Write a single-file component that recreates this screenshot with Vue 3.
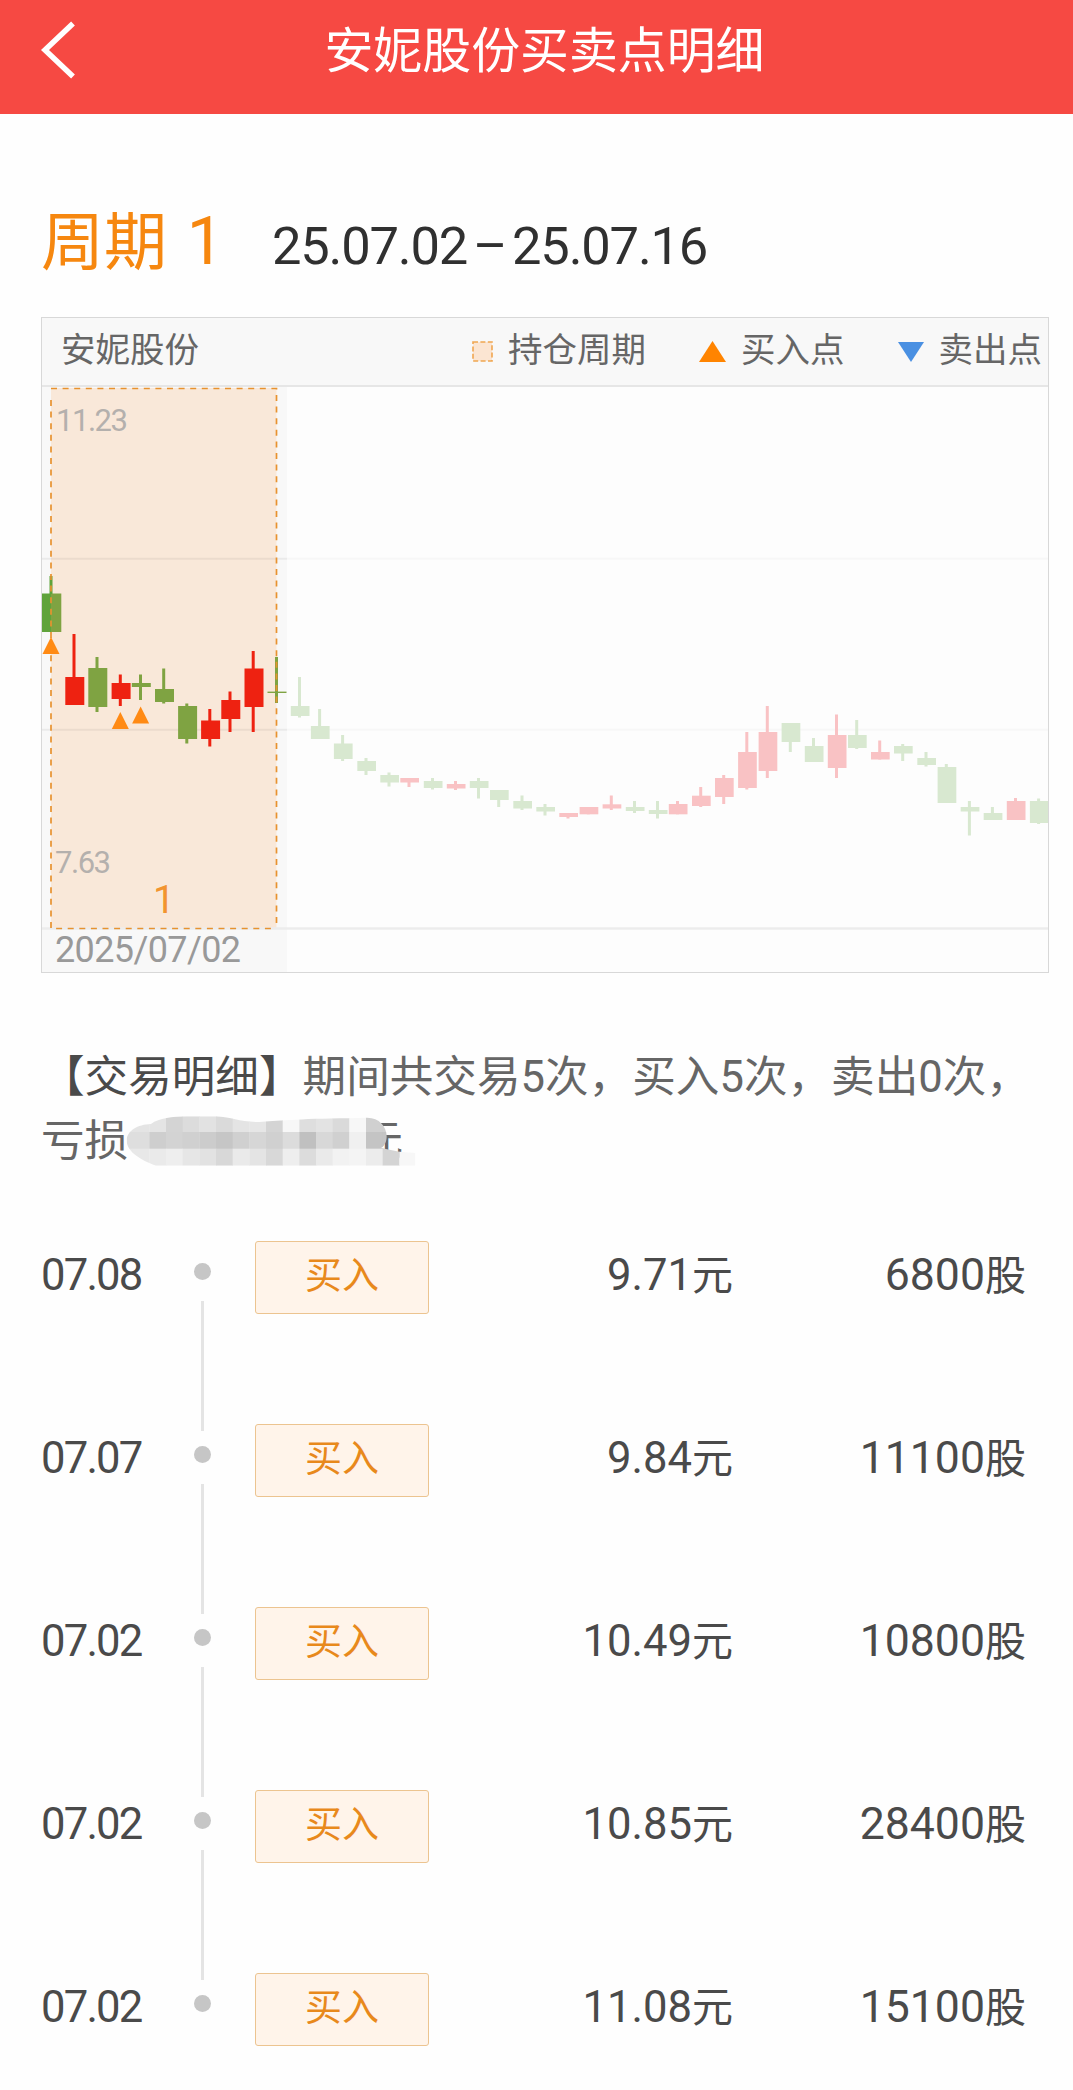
<!-- src/App.vue -->
<script setup>
// Candles: [center x, body top, body bottom, wick top, wick bottom, direction]
const heldCandles = [
  [74, 677, 705, 634, 705, 'up'],
  [97, 668, 707, 657, 712, 'down'],
  [120.3, 683, 699, 674.5, 706, 'up'],
  [140.5, 683, 687, 674.5, 700, 'down'],
  [163.7, 689, 702, 668.5, 703.5, 'down'],
  [186.8, 706, 739, 703.5, 743.5, 'down'],
  [209.8, 720.5, 739, 709, 746.5, 'up'],
  [230, 700, 719, 691.5, 732, 'up'],
  [253.2, 668.5, 707, 651, 732, 'up']
];

const laterCandles = [
  [299.5, 706, 716, 677, 717.5, 'down'],
  [319.6, 726, 739, 709, 739, 'down'],
  [342.6, 743.5, 759, 735, 761, 'down'],
  [366, 761, 771, 758, 775, 'down'],
  [389, 775, 782.5, 772.5, 786.5, 'down'],
  [409, 778, 782.5, 778, 787, 'up'],
  [432.5, 781, 788, 778, 789.5, 'down'],
  [455.5, 784, 788.5, 781, 790, 'up'],
  [478.5, 781, 788, 778, 798.5, 'down'],
  [498.7, 790, 800, 790, 807, 'down'],
  [522, 801, 808.5, 795.5, 810, 'down'],
  [545, 807, 811.5, 804, 815.5, 'down'],
  [568, 813, 817, 813, 818.5, 'up'],
  [588.3, 807, 814.3, 807, 814.3, 'up'],
  [611.3, 804.3, 808.5, 795.5, 810, 'up'],
  [634.5, 807, 811, 801, 813, 'down'],
  [657.5, 810, 814, 801, 818.5, 'down'],
  [677.5, 804, 814.3, 801, 814.3, 'up'],
  [700.7, 795.7, 806, 787, 807, 'up'],
  [723.7, 778, 797, 775, 804, 'up'],
  [746.8, 752, 788, 732, 789.5, 'up'],
  [767.3, 732, 771, 706, 778, 'up'],
  [790.3, 723, 742, 723, 752, 'down'],
  [813.5, 746, 762, 738, 762, 'down'],
  [836.5, 735, 768, 714.5, 778, 'up'],
  [856.7, 735, 748, 720, 749, 'down'],
  [879.7, 752, 759.5, 740.5, 759.5, 'up'],
  [902.7, 746, 753.5, 744, 761, 'down'],
  [926, 758, 765, 752, 766.5, 'down'],
  [946.3, 767, 803, 764, 803, 'down'],
  [969.4, 807, 811.5, 801, 835.5, 'down'],
  [992.4, 813, 820, 807, 820, 'down'],
  [1015.5, 801, 820, 798, 820, 'up'],
  [1038.6, 801, 823, 798.5, 824, 'down']
];

// Buy markers: [center x, top y]
const buyMarks = [
  [51, 637],
  [120.3, 712],
  [140.6, 706.5]
];

// Grey blocks that hide the profit amount
const maskRows = [
  { y: 250, h: 57, shades: ['e4', 'e4', 'e4', 'd4', 'dc', 'e2', 'da', 'e4', 'e6', 'd4', 'f7', 'de', 'e3', 'da', 'f7', 'd0', 'd0'] },
  { y: 307, h: 50, shades: ['de', 'de', 'ce', 'd3', 'd0', 'cc', 'c6', 'd0', 'd6', 'd0', 'dc', 'c0', 'd8', 'd0', 'f0', 'c4', 'c4'] },
  { y: 357, h: 51, shades: ['e8', 'e8', 'ea', 'ee', 'e6', 'e2', 'd8', 'ea', 'e4', 'd8', 'ee', 'dc', 'ea', 'f2', 'f4', 'ec', 'd4', 'f7'] }
];

const trades = [
  { date: '07.08', price: '9.71', amount: '6800' },
  { date: '07.07', price: '9.84', amount: '11100' },
  { date: '07.02', price: '10.49', amount: '10800' },
  { date: '07.02', price: '10.85', amount: '28400' },
  { date: '07.02', price: '11.08', amount: '15100' }
];
</script>

<template>
  <div class="page">
    <header class="nav">
      <svg class="nav-back" width="40" height="62" viewBox="0 0 40 62">
        <path d="M35 4.5 7 31 35 57.5" fill="none" stroke="#fff" stroke-width="5.5" />
      </svg>
      <h1 class="nav-title">安妮股份买卖点明细</h1>
    </header>

    <main class="content">
      <div class="period">
        <span class="period-name">周期 <span class="period-no">1</span></span>
        <span class="period-range">25.07.02 – 25.07.16</span>
      </div>

      <section class="chart">
        <div class="chart-head">
          <span class="chart-name">安妮股份</span>
          <span class="legend">
            <svg width="21" height="21" viewBox="0 0 21 21">
              <rect x="1" y="1" width="19" height="19" fill="#fbe5d2" stroke="#f0a650" stroke-width="1.6" stroke-dasharray="5 2.4" />
            </svg>
            <span>持仓周期</span>
          </span>
          <span class="legend">
            <svg width="27" height="21" viewBox="0 0 27 21"><path d="M13.5 0 27 21H0z" fill="#ff8400" /></svg>
            <span>买入点</span>
          </span>
          <span class="legend">
            <svg width="26" height="20" viewBox="0 0 26 20"><path d="M0 0h26L13 20z" fill="#4a90e2" /></svg>
            <span>卖出点</span>
          </span>
        </div>

        <svg class="chart-plot" width="1006" height="585" viewBox="42 387 1006 585">
          <rect x="42" y="387" width="245" height="585" fill="#f8f8f8" />
          <rect x="51" y="388" width="225.5" height="540.5" fill="#f9e8d9" />
          <g stroke-width="2">
            <path d="M42 558.7h245M42 729.7h245" stroke="#000" stroke-opacity=".055" />
            <path d="M287 558.7h761M287 729.7h761" stroke="#f7f7f7" />
            <path d="M42 928.5h1006" stroke="#ececec" stroke-width="2.5" />
          </g>

          <g class="axis">
            <text x="56" y="431" font-size="31" textLength="72">11.23</text>
            <text x="55" y="873" font-size="31" textLength="56">7.63</text>
            <text class="axis-date" x="55" y="962" font-size="36" textLength="186">2025/07/02</text>
            <text class="axis-no" x="153" y="913" font-size="39">1</text>
          </g>

          <!-- first day of the holding period, half outside the area -->
          <rect x="42" y="593.5" width="9" height="38.5" fill="#5fa33b" />
          <rect x="51" y="593.5" width="10.3" height="38.5" fill="#7fa342" />
          <rect x="49.5" y="576" width="3" height="18" fill="#5fa33b" />

          <g class="held">
            <g v-for="c in heldCandles" :key="c[0]" :class="c[5]">
              <rect :x="c[0] - 1.5" :y="c[3]" width="3" :height="c[4] - c[3]" />
              <rect :x="c[0] - 8.7" :y="c[1]" width="19" :height="c[2] - c[1]" />
            </g>
            <rect class="down" x="275" y="657" width="3" height="46" />
            <rect class="down" x="267.5" y="691.6" width="19" height="1.4" />
          </g>

          <g class="later">
            <g v-for="c in laterCandles" :key="c[0]" :class="c[5]">
              <rect :x="c[0] - 1.5" :y="c[3]" width="3" :height="c[4] - c[3]" />
              <rect :x="c[0] - 8.7" :y="c[1]" width="18.7" :height="c[2] - c[1]" />
            </g>
          </g>

          <g fill="none" stroke="#e8922f" stroke-width="1.7" stroke-dasharray="6 5.6">
            <path d="M51 388.5H276.5V928.5" />
            <path d="M51 400V928.5H276.5" />
          </g>

          <path v-for="m in buyMarks" :key="m[0]" :d="`M${m[0]} ${m[1]}l8.5 17h-17z`" fill="#ff8a14" />
        </svg>
      </section>

      <p class="summary">
        <span class="summary-title">【交易明细】</span>期间共交易5次，买入5次，卖出0次，<br />亏损<span class="masked">
          <span>元</span>
          <svg class="mask" width="300" height="70" viewBox="290 250 900 210">
            <defs>
              <clipPath id="blob">
                <path d="M292 332C292 304 325 284 365 283 390 264 430 262 470 260H560C610 263 630 277 690 277 740 275 800 267 960 266L1010 264C1048 262 1072 290 1072 320 1072 337 1065 350 1055 355L1110 366 1158 370V408H380C330 390 292 365 292 332z" />
              </clipPath>
            </defs>
            <g clip-path="url(#blob)">
              <template v-for="row in maskRows" :key="row.y">
                <rect
                  v-for="(s, i) in row.shades"
                  :key="i"
                  :x="260 + i * 50"
                  :y="row.y"
                  width="51"
                  :height="row.h + 1"
                  :fill="`#${s}${s}${s}`"
                />
              </template>
            </g>
          </svg>
        </span>
      </p>

      <ul class="trades">
        <li v-for="(t, i) in trades" :key="i" class="trade">
          <span class="trade-date">{{ t.date }}</span>
          <span class="trade-line"></span>
          <span class="trade-tag">买入</span>
          <span class="trade-price">{{ t.price }}<i>元</i></span>
          <span class="trade-amount">{{ t.amount }}<i>股</i></span>
        </li>
      </ul>
    </main>
  </div>
</template>

<style>
body {
  margin: 0;
  background: #fefefe;
}
</style>

<style scoped>
.page {
  height: 2090px;
  overflow: hidden;
  background: #fefefe;
  color: #4a4a4a;
  font-family: Roboto, 'Noto Sans CJK SC', sans-serif;
}

/* Top bar */
.nav {
  display: grid;
  grid-template-columns: 38px 40px 1fr 62px;
  align-items: center;
  height: 100px;
  padding-bottom: 14px;
  background: #f64943;
}

.nav-back {
  grid-column: 2;
}

.nav-title {
  margin: 0;
  padding-top: 4px;
  color: #fff;
  font-size: 48.9px;
  font-weight: 400;
  line-height: 96px;
  text-align: center;
}

.content {
  padding: 0 24px 0 41px;
}

/* Period heading */
.period {
  display: flex;
  align-items: baseline;
  height: 203px;
  line-height: 256px;
}

.period-name {
  width: 231px;
  color: #f6870f;
  font-size: 63px;
  word-spacing: 4px;
}

.period-no {
  font-size: 66px;
}

.period-range {
  color: #303030;
  font-size: 52.5px;
  letter-spacing: -1.2px;
  word-spacing: -6px;
  white-space: nowrap;
}

/* Chart */
.chart {
  border: 1px solid #d8d8d8;
  background: #fdfdfd;
}

.chart-head {
  display: flex;
  align-items: center;
  height: 67px;
  padding: 0 6px 0 19px;
  border-bottom: 2px solid #e6e6e6;
  background: #f8f8f8;
  color: #666;
  font-size: 34.5px;
  line-height: 61px;
}

.chart-name {
  flex: 1;
  padding-bottom: 2px;
}

.legend {
  display: flex;
  align-items: center;
  gap: 15px;
  white-space: nowrap;
}

.legend + .legend {
  margin-left: 53px;
}

.legend span {
  padding-bottom: 2px;
}

.chart-plot {
  display: block;
}

.axis {
  fill: #b4b0ad;
}

.axis-date {
  fill: #999;
}

.axis-no {
  fill: #f29430;
}

.held .up {
  fill: #ee2211;
}

.held .down {
  fill: #7fa342;
}

.later .up {
  fill: #f9c2c4;
}

.later .down {
  fill: #d8e8d0;
}

/* Summary */
.summary {
  margin: 73px 0 0;
  color: #666;
  font-size: 43.6px;
  line-height: 64px;
  white-space: nowrap;
}

.summary-title {
  color: #4a4a4a;
}

.masked {
  position: relative;
  display: inline-block;
  width: 275px;
  text-align: right;
}

.mask {
  position: absolute;
  left: -2px;
  top: 3px;
}

/* Trades */
.trades {
  margin: 67px 0 0;
  padding: 0;
  list-style: none;
}

.trade {
  display: grid;
  grid-template-columns: 153px 61px 174px 304px 1fr;
  height: 183px;
  padding-right: 23px;
  font-size: 43.6px;
  line-height: 69px;
}

.trade-date {
  letter-spacing: -1.8px;
}

.trade-line {
  display: flex;
  flex-direction: column;
  gap: 21px;
  width: 17px;
  padding-top: 22px;
}

.trade-line::before {
  content: '';
  height: 17px;
  border-radius: 50%;
  background: #c6c6c6;
}

.trade-line::after {
  content: '';
  width: 3px;
  height: 130px;
  margin: 0 auto;
  background: #e4e4e4;
}

.trade:last-child .trade-line::after {
  display: none;
}

.trade-tag {
  box-sizing: border-box;
  height: 73px;
  border: 1.5px solid #ecc490;
  border-radius: 3px;
  background: #fff4ea;
  color: #e8891c;
  font-size: 37px;
  line-height: 69px;
  text-align: center;
}

.trade-price,
.trade-amount {
  text-align: right;
}

.trade-amount {
  font-size: 44.6px;
}

.trade i {
  font-size: 41px;
  font-style: normal;
}
</style>
